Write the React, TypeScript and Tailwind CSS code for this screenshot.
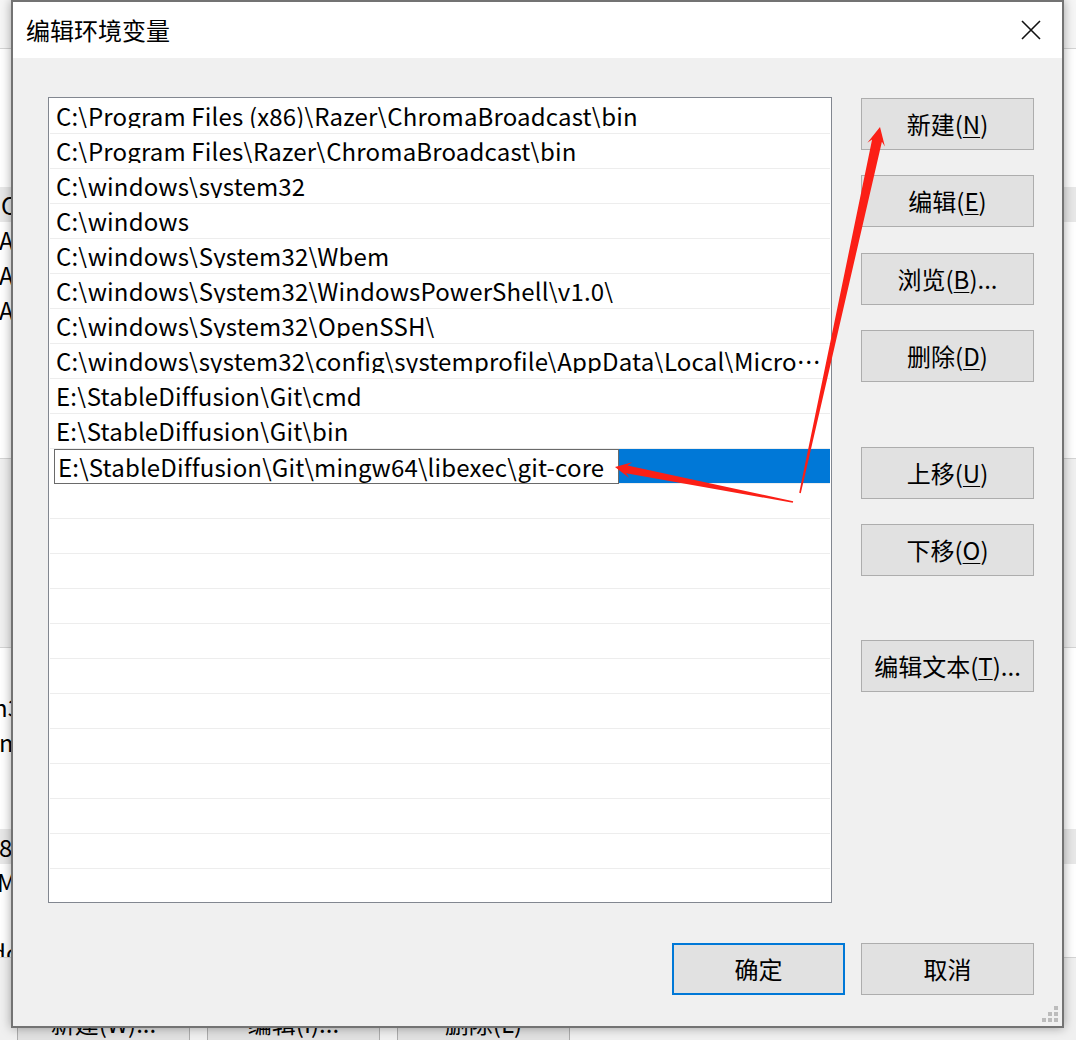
import React from "react";

type Pt = [number, number];

function arrowPoints(
  tail: Pt,
  tip: Pt,
  headLen: number,
  headHalf: number,
  neckHalf: number,
  tailHalf: number
): string {
  const dx = tip[0] - tail[0];
  const dy = tip[1] - tail[1];
  const L = Math.hypot(dx, dy);
  const ux = dx / L;
  const uy = dy / L;
  const nx = -uy;
  const ny = ux;
  const nb = [tip[0] - ux * (headLen - 3), tip[1] - uy * (headLen - 3)];
  const wb = [tip[0] - ux * (headLen + 1), tip[1] - uy * (headLen + 1)];
  const pts: number[][] = [
    [tail[0] + nx * tailHalf, tail[1] + ny * tailHalf],
    [nb[0] + nx * neckHalf, nb[1] + ny * neckHalf],
    [wb[0] + nx * headHalf, wb[1] + ny * headHalf],
    [tip[0], tip[1]],
    [wb[0] - nx * headHalf, wb[1] - ny * headHalf],
    [nb[0] - nx * neckHalf, nb[1] - ny * neckHalf],
    [tail[0] - nx * tailHalf, tail[1] - ny * tailHalf],
  ];
  return pts.map((p) => `${p[0].toFixed(1)},${p[1].toFixed(1)}`).join(" ");
}

const paths = [
  "C:\\Program Files (x86)\\Razer\\ChromaBroadcast\\bin",
  "C:\\Program Files\\Razer\\ChromaBroadcast\\bin",
  "C:\\windows\\system32",
  "C:\\windows",
  "C:\\windows\\System32\\Wbem",
  "C:\\windows\\System32\\WindowsPowerShell\\v1.0\\",
  "C:\\windows\\System32\\OpenSSH\\",
  "C:\\windows\\system32\\config\\systemprofile\\AppData\\Local\\Microsoft\\WindowsApps",
  "E:\\StableDiffusion\\Git\\cmd",
  "E:\\StableDiffusion\\Git\\bin",
];

function Acc({ children }: { children: React.ReactNode }) {
  return <span className="underline decoration-1 underline-offset-[3px]">{children}</span>;
}

function Btn({
  children,
  className = "",
  primary = false,
}: {
  children: React.ReactNode;
  className?: string;
  primary?: boolean;
}) {
  return (
    <div
      className={
        "w-[173px] h-[52px] shrink-0 flex items-center justify-center bg-[#e1e1e1] text-[24px] leading-none text-black " +
        (primary ? "border-2 border-[#0078d7] " : "border border-[#adadad] ") +
        className
      }
    >
      <span>{children}</span>
    </div>
  );
}

function BackgroundWindow() {
  return (
    <div className="absolute inset-0 bg-[#f0f0f0] flex flex-col text-[24px] leading-none text-black">
      <div className="h-[48px] shrink-0 bg-[#f6f6f6]" />
      <div className="h-[411px] shrink-0 bg-white border-y border-[#d4d4d4] overflow-hidden flex flex-col pt-[138px]">
        <div className="h-[35px] shrink-0 bg-[#e8e8e8] flex items-center pl-[1px]">C:\Users</div>
        <div className="h-[35px] shrink-0 flex items-center -ml-[1px]">AppData</div>
        <div className="h-[35px] shrink-0 flex items-center -ml-[1px]">AppData</div>
        <div className="h-[35px] shrink-0 flex items-center -ml-[1px]">AppData</div>
      </div>
      <div className="h-[188px] shrink-0" />
      <div className="h-[311px] shrink-0 bg-white border-y border-[#d4d4d4] overflow-hidden flex flex-col pt-[41px]">
        <div className="h-[35px] shrink-0 flex items-center -ml-[7px]">n32</div>
        <div className="h-[35px] shrink-0 flex items-center -ml-[1px]">m</div>
        <div className="h-[35px] shrink-0 flex items-center" />
        <div className="h-[35px] shrink-0 flex items-center" />
        <div className="h-[35px] shrink-0 bg-[#e8e8e8] flex items-center -ml-[1px]">8</div>
        <div className="h-[35px] shrink-0 flex items-center -ml-[3px]">MI</div>
        <div className="h-[35px] shrink-0 flex items-center" />
        <div className="h-[35px] shrink-0 flex items-center -ml-[9px]">doc</div>
      </div>
      <div className="flex gap-[17px] pl-[17px] mt-[39px]">
        <Btn>新建(W)...</Btn>
        <Btn>编辑(I)...</Btn>
        <Btn>删除(L)</Btn>
      </div>
    </div>
  );
}

export default function App() {
  const a1 = arrowPoints([800, 493], [880, 127], 17, 9, 5, 0.8);
  const a2 = arrowPoints([793, 502], [615, 467], 15, 8, 4, 0.8);
  return (
    <div className="relative w-[1076px] h-[1040px] overflow-hidden bg-[#f0f0f0] font-['Noto_Sans_CJK_SC','Noto_Sans',sans-serif] text-black">
      <BackgroundWindow />

      {/* Dialog */}
      <div className="absolute left-[11px] top-0 w-[1053px] h-[1028px] border-2 border-[#737373] bg-[#f0f0f0] flex flex-col shadow-[0_0_10px_rgba(0,0,0,0.35)]">
        {/* Title bar */}
        <div className="h-[56px] shrink-0 bg-white flex items-center justify-between pl-[13px] pr-[21px]">
          <span className="text-[24px] leading-none">编辑环境变量</span>
          <svg width="20" height="20" viewBox="0 0 20 20" className="block">
            <path d="M1 1 L19 19 M19 1 L1 19" stroke="#111" strokeWidth="1.6" fill="none" />
          </svg>
        </div>

        {/* Body */}
        <div className="flex-1 flex flex-col pl-[35px] pr-[28px] pt-[39px] pb-[31px]">
          <div className="flex gap-[29px]">
            {/* List */}
            <div className="w-[784px] h-[806px] shrink-0 bg-white border border-[#828790] p-[1px] overflow-hidden flex flex-col">
              {paths.map((p, i) => (
                <div
                  key={i}
                  className="h-[35px] shrink-0 border-b border-[#ededed] flex items-center pl-[6px] pr-[9px] text-[24px] leading-none tracking-[0.17px] whitespace-nowrap overflow-hidden"
                >
                  <span className="truncate block">{p}</span>
                </div>
              ))}
              {/* Selected editing row */}
              <div className="h-[35px] shrink-0 flex items-start">
                <div className="w-[4px] h-[35px] shrink-0 bg-white" />
                <div className="w-[565px] h-[35px] shrink-0 border border-[#6a6a6a] bg-white flex items-center pl-[3px] text-[24px] leading-none tracking-[0.17px] whitespace-nowrap">
                  E:\StableDiffusion\Git\mingw64\libexec\git-core
                </div>
                <div className="flex-1 h-[35px] bg-[#0078d7] border-b border-[#ededed]" />
              </div>
              {Array.from({ length: 12 }).map((_, i) => (
                <div key={"e" + i} className="h-[35px] shrink-0 border-b border-[#ededed]" />
              ))}
            </div>

            {/* Buttons */}
            <div className="flex flex-col">
              <Btn className="mt-[1px]">
                新建(<Acc>N</Acc>)
              </Btn>
              <Btn className="mt-[25px]">
                编辑(<Acc>E</Acc>)
              </Btn>
              <Btn className="mt-[26px]">
                浏览(<Acc>B</Acc>)...
              </Btn>
              <Btn className="mt-[25px]">
                删除(<Acc>D</Acc>)
              </Btn>
              <Btn className="mt-[65px]">
                上移(<Acc>U</Acc>)
              </Btn>
              <Btn className="mt-[25px]">
                下移(<Acc>O</Acc>)
              </Btn>
              <Btn className="mt-[64px]">
                编辑文本(<Acc>T</Acc>)...
              </Btn>
            </div>
          </div>

          <div className="mt-[40px] flex justify-end gap-[16px]">
            <Btn primary>确定</Btn>
            <Btn>取消</Btn>
          </div>
        </div>

        {/* Resize grip */}
        <div className="absolute right-[4px] bottom-[4px] grid grid-cols-3 gap-[2px]">
          <div className="w-[4px] h-[4px]" />
          <div className="w-[4px] h-[4px]" />
          <div className="w-[4px] h-[4px] bg-[#bcbcbc]" />
          <div className="w-[4px] h-[4px]" />
          <div className="w-[4px] h-[4px] bg-[#bcbcbc]" />
          <div className="w-[4px] h-[4px] bg-[#bcbcbc]" />
          <div className="w-[4px] h-[4px] bg-[#bcbcbc]" />
          <div className="w-[4px] h-[4px] bg-[#bcbcbc]" />
          <div className="w-[4px] h-[4px] bg-[#bcbcbc]" />
        </div>
      </div>

      {/* Red annotation arrows */}
      <svg className="absolute inset-0 pointer-events-none" width="1076" height="1040" viewBox="0 0 1076 1040">
        <polygon points={a1} fill="#fb1f16" />
        <polygon points={a2} fill="#fb1f16" />
      </svg>
    </div>
  );
}
